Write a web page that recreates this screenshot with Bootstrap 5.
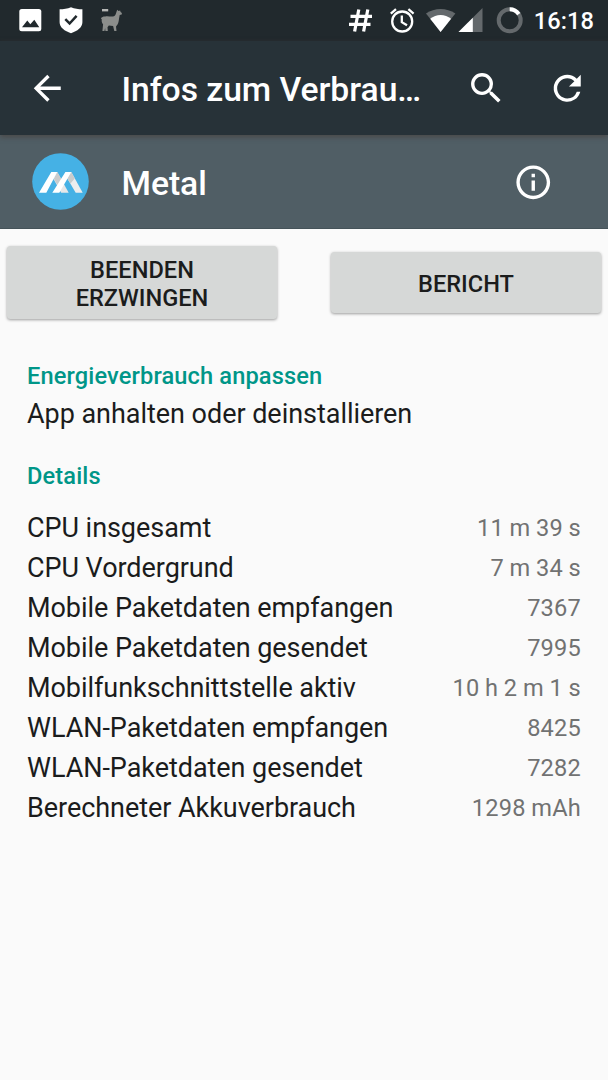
<!DOCTYPE html>
<html lang="de">
<head>
<meta charset="utf-8">
<meta name="viewport" content="width=device-width, initial-scale=1">
<title>Infos zum Verbrauch</title>
<link href="https://cdn.jsdelivr.net/npm/bootstrap@5.3.0/dist/css/bootstrap.min.css" rel="stylesheet">
<style>
body{font-family:Roboto,"Noto Sans",sans-serif;background:#fafafa;color:#1b1c1c;line-height:1.2;min-height:1080px}
svg{display:block;flex:none}
.fw-mid{font-weight:500}
.status-bar{height:41px;background:#21292d;padding-left:13px;padding-right:14px}
.clock{width:61px;font-size:23.6px;line-height:43px;letter-spacing:.1px}
.app-bar{height:94px;background:#273238;padding-left:27px;padding-right:21px;box-shadow:0 2px 5px rgba(70,60,55,.65);position:relative;z-index:1}
.bar-title{font-size:33.7px;line-height:40px;padding-top:3px;letter-spacing:-.04px}
.app-bar .bar-title{margin-left:54px;width:344.5px}
.entry-bar{height:94px;background:#505e65;padding-left:32px;padding-right:54.5px;border-bottom:1px solid #455359}
.entry-bar .bar-title{margin-left:32.5px;padding-top:4px}
.info-icon{margin-top:1px}
.actions{padding:17px 7px 0;height:92px}
.btn-tile{width:270px;background:#d6d8d7!important;color:#1b1c1c!important;border:0;border-radius:3.5px;font-size:23.6px;font-weight:500;line-height:27.5px;box-shadow:0 1px 3px rgba(0,0,0,.38)}
.tile-tall{height:73px;padding:11px 50px 8px}
.tile-short{height:61px;padding:4px 0 0;margin-top:6px}
.section-pad{padding-left:27px;padding-right:27px}
.section-title{font-size:23.6px;line-height:28px;letter-spacing:.14px;color:#009688;margin:0}
.adjust{padding-top:41px}
.details{padding-top:32px}
.details dl{margin:18px 0 0}
.row-text{font-size:27px;line-height:32px;letter-spacing:-.04px;margin:8px 0 0}
.detail{height:40px}
.detail dt{font-weight:400;font-size:27px;line-height:40px;letter-spacing:-.05px}
.detail dd{margin:0;font-size:23.6px;line-height:41px;letter-spacing:.2px;word-spacing:-.4px;color:#717272}
</style>
</head>
<body>
<header class="status-bar d-flex text-white" aria-label="Statusleiste">
  <svg width="37" height="41" viewBox="13 0 37 41"><rect x="19.3" y="9" width="22" height="22.3" rx="2.5" fill="#fff"/><path d="M22 27.2l5.300-6.600 3 3.700 4-4.500 5 7.400z" fill="#21292d"/></svg>
  <svg width="40" height="41" viewBox="50 0 40 41"><path d="M71 7.200c3.500 1.400 7.500 2 11.400 2.100v13c0 5.200-5 8.700-11.400 11-6.400-2.300-11.400-5.800-11.400-11v-13C63.500 9.200 67.500 8.600 71 7.200z" fill="#fff"/><path d="M65.300 19.200l4.300 4.300 7-7.700" fill="none" stroke="#21292d" stroke-width="2.500"/></svg>
  <svg width="40" height="41" viewBox="90 0 40 41"><path d="M102 9h6.200v2.400H102z" fill="#b5b6b4"/><path d="M117.200 9.800l1.300 1.300 1.600-.6.500 1.600 1.300.9-.2 1.500-2 .4-.6 3.400c-.3 2.600-.6 4.600-1.600 6.200l-1.500 2 .5 4.500h-2.200l-1.200-5-4.300-.4-1.300 1.600.3 3.800h-2.400l-.3-3-.6 3h-2.100l.7-6.800c-1.200-1.400-1.700-3.100-1.300-4.800l-.9-1.200c1-1.300 2.500-1.900 4.300-1.800 3.300-.7 6.500.8 9.200-.4 1.600-.8 1.700-3.400 2.800-6.200z" fill="#8b8d8b"/></svg>
  <svg class="ms-auto" width="43" height="41" viewBox="338 0 43 41"><path d="M358.800 9.500l-4.200 22M367.800 9.500l-4.200 22M350.500 16.400h21.500M349 24.400h21.500" stroke="#fff" stroke-width="3.200" fill="none"/></svg>
  <svg width="40" height="41" viewBox="381 0 40 41"><g fill="none" stroke="#fff" stroke-width="2.300"><circle cx="402.200" cy="21.500" r="10"/><path d="M390.800 13.600l5.200-4.400M408.400 9.200l5.200 4.400M401.800 15.500v6.700l5.200 3.100"/></g></svg>
  <svg width="36" height="41" viewBox="421 0 36 41"><path d="M440.600 32L426 13.600c8.500-6.200 20.700-6.200 29.400 0z" fill="#64696c"/><path d="M440.600 32l-10.400-13.200c6-5.100 14.800-5.100 20.900 0z" fill="#fff"/></svg>
  <svg width="33" height="41" viewBox="457 0 33 41"><path d="M482.500 8v24h-24z" fill="#64696c"/><path d="M472.800 17.700V32h-14.300z" fill="#fff"/></svg>
  <svg width="43" height="41" viewBox="490 0 43 41"><circle cx="509.700" cy="20.300" r="11" fill="none" stroke="#64696c" stroke-width="4"/><path d="M509.700 9.300a11 11 0 0 1 9.100 4.800" fill="none" stroke="#fff" stroke-width="4"/></svg>
  <span class="clock fw-mid text-end text-nowrap">16:18</span>
</header>

<nav class="app-bar d-flex align-items-center text-white">
  <svg width="40.5" height="40.5" viewBox="0 0 24 24" fill="#fff"><path d="M20 11H7.830l5.590-5.590L12 4l-8 8 8 8 1.410-1.410L7.830 13H20v-2z"/></svg>
  <h1 class="bar-title fw-mid mb-0 text-nowrap">Infos zum Verbrau…</h1>
  <svg width="40.5" height="40.5" viewBox="0 0 24 24" fill="#fff"><path d="M15.500 14h-.79l-.28-.27A6.471 6.471 0 0 0 16 9.500 6.500 6.500 0 1 0 9.500 16c1.610 0 3.090-.59 4.230-1.570l.27.28v.79l5 4.990L20.490 19l-4.990-5zm-6 0C7.010 14 5 11.990 5 9.500S7.010 5 9.500 5 14 7.010 14 9.500 11.990 14 9.500 14z"/></svg>
  <svg class="ms-auto" width="40.5" height="40.5" viewBox="0 0 24 24" fill="#fff"><path d="M17.650 6.350A7.958 7.958 0 0 0 12 4a8 8 0 1 0 7.730 10h-2.080A5.990 5.990 0 0 1 12 18c-3.310 0-6-2.690-6-6s2.690-6 6-6c1.660 0 3.140.69 4.220 1.780L13 11h7V4l-2.350 2.350z"/></svg>
</nav>

<section class="entry-bar d-flex align-items-center text-white">
  <svg width="57" height="57" viewBox="0 0 57 57"><circle cx="28.500" cy="28.500" r="28.300" fill="#45b1e5"/><path d="M25.300 19L36.700 39.700h-7.500L21.500 26z" fill="#e6e7e8"/><path d="M39.300 19l11.400 20.700h-7L34.500 24z" fill="#ecedee"/><path d="M25.300 19l4.200 7.600-3.500 6.300-4.300-7.500zM39.300 19l3.500 6.400-4.300 5.200-4-6.100z" fill="#c9cccd"/><path d="M19.300 19h6L14.300 39.700H7zM33.400 19h5.900L27.300 39.700h-7z" fill="#fff"/></svg>
  <h2 class="bar-title fw-mid mb-0">Metal</h2>
  <svg class="info-icon ms-auto" width="40.5" height="40.5" viewBox="0 0 24 24" fill="#fff"><path d="M11 17h2v-6h-2v6zm1-15C6.480 2 2 6.480 2 12s4.480 10 10 10 10-4.480 10-10S17.520 2 12 2zm0 18c-4.410 0-8-3.590-8-8s3.590-8 8-8 8 3.590 8 8-3.590 8-8 8zM11 9h2V7h-2v2z"/></svg>
</section>

<main>
  <div class="actions d-flex justify-content-between align-items-start">
    <button type="button" class="btn btn-tile tile-tall">BEENDEN ERZWINGEN</button>
    <button type="button" class="btn btn-tile tile-short">BERICHT</button>
  </div>
  <section class="section-pad adjust">
    <h3 class="section-title fw-mid">Energieverbrauch anpassen</h3>
    <p class="row-text">App anhalten oder deinstallieren</p>
  </section>
  <section class="section-pad details">
    <h3 class="section-title fw-mid">Details</h3>
    <dl>
      <div class="detail d-flex justify-content-between"><dt>CPU insgesamt</dt><dd>11 m 39 s</dd></div>
      <div class="detail d-flex justify-content-between"><dt>CPU Vordergrund</dt><dd>7 m 34 s</dd></div>
      <div class="detail d-flex justify-content-between"><dt>Mobile Paketdaten empfangen</dt><dd>7367</dd></div>
      <div class="detail d-flex justify-content-between"><dt>Mobile Paketdaten gesendet</dt><dd>7995</dd></div>
      <div class="detail d-flex justify-content-between"><dt>Mobilfunkschnittstelle aktiv</dt><dd>10 h 2 m 1 s</dd></div>
      <div class="detail d-flex justify-content-between"><dt>WLAN-Paketdaten empfangen</dt><dd>8425</dd></div>
      <div class="detail d-flex justify-content-between"><dt>WLAN-Paketdaten gesendet</dt><dd>7282</dd></div>
      <div class="detail d-flex justify-content-between"><dt>Berechneter Akkuverbrauch</dt><dd>1298 mAh</dd></div>
    </dl>
  </section>
</main>
<script src="https://cdn.jsdelivr.net/npm/bootstrap@5.3.0/dist/js/bootstrap.bundle.min.js"></script>
</body>
</html>
